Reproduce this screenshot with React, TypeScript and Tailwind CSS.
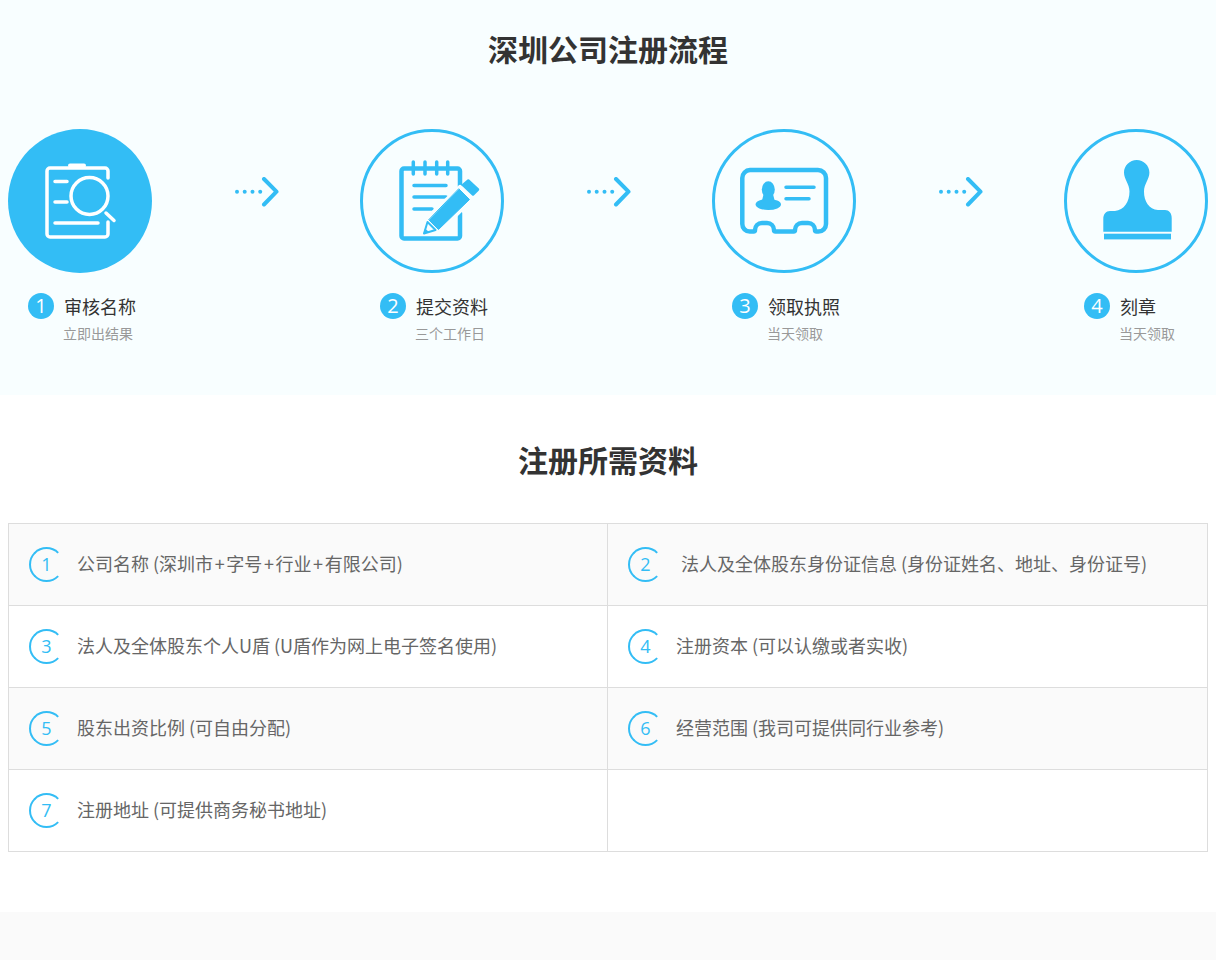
import React from "react";

const steps = [
  { title: "审核名称", sub: "立即出结果", icon: <ReviewIcon />, active: true },
  { title: "提交资料", sub: "三个工作日", icon: <NoteIcon /> },
  { title: "领取执照", sub: "当天领取", icon: <CardIcon /> },
  { title: "刻章", sub: "当天领取", icon: <StampIcon /> },
];

const Plus = () => <span className="mx-[1.6px]">+</span>;

const materials = [
  { id: 1, text: <>公司名称 (深圳市<Plus />字号<Plus />行业<Plus />有限公司)</> },
  { id: 2, text: "法人及全体股东身份证信息 (身份证姓名、地址、身份证号)", shift: true },
  { id: 3, text: "法人及全体股东个人U盾 (U盾作为网上电子签名使用)" },
  { id: 4, text: "注册资本 (可以认缴或者实收)" },
  { id: 5, text: "股东出资比例 (可自由分配)" },
  { id: 6, text: "经营范围 (我司可提供同行业参考)" },
  { id: 7, text: "注册地址 (可提供商务秘书地址)" },
];

function ReviewIcon() {
  return (
    <svg viewBox="0 0 144 144" className="w-full h-full" fill="none" stroke="#fff" strokeWidth="3.500" strokeLinecap="round">
      <path d="M100 49V42a3 3 0 0 0-3-3H42a3 3 0 0 0-3 3v63a3 3 0 0 0 3 3h55a3 3 0 0 0 3-3V93" />
      <path d="M62 36.500h14" strokeWidth="4" />
      <path d="M47 52.500h12M47 73h12M47 94h43" />
      <circle cx="81.500" cy="67" r="18.500" />
      <path d="M98 84l8 7.500" />
    </svg>
  );
}

function NoteIcon() {
  return (
    <svg viewBox="0 0 144 144" className="w-full h-full" fill="none" stroke="#33bdf5" strokeLinecap="round" strokeLinejoin="round">
      <path d="M100 60V42a2.500 2.500 0 0 0-2.500-2.500H44a2.500 2.500 0 0 0-2.500 2.500v65a2.500 2.500 0 0 0 2.500 2.500h53.500a2.500 2.500 0 0 0 2.500-2.500V84" strokeWidth="4.500" />
      <path d="M53.300 33v12M65 33v12M76.700 33v12M87.700 33v12" strokeWidth="3.500" />
      <path d="M54 56.500h32M54 68h32M54 80h18" strokeWidth="3.500" />
      {/* gap between the pencil and the pad */}
      <path d="M100 58.500L111.700 70L78 103L63.300 104.500L67 90Z" fill="#f8feff" stroke="#f8feff" strokeWidth="5" />
      <path d="M99 60L109.500 70.500L78.500 100.500L69 91Z" fill="#33bdf5" stroke="#33bdf5" strokeWidth="1" />
      <path d="M108.300 51.500L118 60.500L113 65.500L103 56Z" fill="#33bdf5" stroke="#33bdf5" strokeWidth="2.500" />
      <path d="M67.500 93L75.500 101L64 104.500Z" fill="#f8feff" stroke="#33bdf5" strokeWidth="2" />
      <path d="M63.500 104.500L65 99.500L69 103Z" fill="#33bdf5" stroke="none" />
    </svg>
  );
}

function CardIcon() {
  return (
    <svg viewBox="0 0 144 144" className="w-full h-full" fill="none" stroke="#33bdf5" strokeLinecap="round" strokeLinejoin="round">
      <path
        d="M38 41h68a8 8 0 0 1 8 8v46a7.500 7.500 0 0 1-7.500 7.500h-2a1.500 1.500 0 0 1-1.500-1.500c0-4-3-7-7-7H90c-4 0-7 3-7 7a1.500 1.500 0 0 1-1.500 1.500h-18a1.500 1.500 0 0 1-1.500-1.500c0-4-3-7-7-7H50c-4 0-7 3-7 7a1.500 1.500 0 0 1-1.500 1.500h-3.700A7.500 7.500 0 0 1 30.300 95V49a8 8 0 0 1 7.700-8Z"
        strokeWidth="4.500"
      />
      <ellipse cx="56.300" cy="60.500" rx="6.500" ry="8.300" fill="#33bdf5" stroke="none" />
      <ellipse cx="56.300" cy="75.500" rx="12.700" ry="5.500" fill="#33bdf5" stroke="none" />
      <path d="M61 65h-9.400l-2 8h13.400Z" fill="#33bdf5" stroke="none" />
      <path d="M74 58.300h28M74 69.700h23" strokeWidth="3.500" />
    </svg>
  );
}

function StampIcon() {
  return (
    <svg viewBox="0 0 144 144" className="w-full h-full" fill="#33bdf5">
      <path d="M72.700 31c7 0 12.700 5.600 12.700 12.600c0 7-5.400 11.500-5.400 19c0 10 5 18 14 18.400h7c4 0 6.700 3 6.700 8V102.700H39.300V90c0-5 2.700-8 6.700-8h5c9-.4 14.500-9.400 14.500-19.400c0-7.500-5.500-12-5.500-19C60 36.600 65.700 31 72.700 31Z" />
      <rect x="40" y="104.700" width="67" height="5.700" />
    </svg>
  );
}

function Arrow() {
  return (
    <svg viewBox="0 0 44 30" className="w-[44px] h-[30px] self-start mt-[48px] translate-x-px" fill="#33bdf5" stroke="none">
      <circle cx="2" cy="14.700" r="2" />
      <circle cx="9.700" cy="14.700" r="2" />
      <circle cx="17.500" cy="14.700" r="2" />
      <circle cx="25.200" cy="14.700" r="2" />
      <path d="M29 2L41.500 14.700L29 27.500" fill="none" stroke="#33bdf5" strokeWidth="4" strokeLinecap="round" strokeLinejoin="round" />
    </svg>
  );
}

function Step({ step, num }: { step: (typeof steps)[number]; num: number }) {
  return (
    <div className="w-[144px]">
      <div className={step.active ? "w-[144px] h-[144px] rounded-full bg-[#33bdf5]" : "w-[144px] h-[144px] rounded-full border-[3px] border-[#33bdf5] [&>svg]:-m-[3px] [&>svg]:w-[144px] [&>svg]:h-[144px]"}>
        {step.icon}
      </div>
      <div className="mt-5 ml-5 flex items-center gap-[10px]">
        <span className="w-[26px] h-[26px] rounded-full bg-[#33bdf5] text-white text-[20px] leading-none flex items-center justify-center font-['Open_Sans',sans-serif]">
          {num}
        </span>
        <span className="text-[18px] leading-[26px] text-[#333] whitespace-nowrap">{step.title}</span>
      </div>
      <div className="mt-1 ml-[55px] text-[14px] leading-5 text-[#999] whitespace-nowrap">{step.sub}</div>
    </div>
  );
}

function Ring({ num }: { num: number }) {
  return (
    <span className="w-[35px] h-[35px] shrink-0 rounded-full border-2 border-[#33bdf5] border-r-transparent flex items-center justify-center text-[18px] text-[#33bdf5] font-['Open_Sans',sans-serif]">
      {num}
    </span>
  );
}

export default function App() {
  return (
    <div className="min-h-[960px] bg-white font-['Noto_Sans_CJK_SC','Noto_Sans',sans-serif]">
      <section className="h-[395px] bg-[#f8feff]">
        <div className="w-[1200px] mx-auto">
          <h2 className="pt-[28px] text-center text-[30px] leading-[40px] font-bold text-[#333]">深圳公司注册流程</h2>
          <div className="mt-[61px] flex justify-between">
            {steps.map((step, i) => (
              <React.Fragment key={step.title}>
                <Step step={step} num={i + 1} />
                {i < 3 && <Arrow />}
              </React.Fragment>
            ))}
          </div>
        </div>
      </section>

      <section className="w-[1200px] mx-auto">
        <h2 className="pt-[44px] text-center text-[30px] leading-[40px] font-bold text-[#333]">注册所需资料</h2>
        <div className="mt-[44px] grid grid-cols-2 border-l border-r border-t border-[#ddd]">
          {materials.map((m, i) => (
            <div
              key={m.id}
              className={`h-[82px] pl-5 flex items-center gap-[13px] border-b border-[#ddd] ${i % 2 === 0 ? "border-r" : ""} ${i % 4 < 2 ? "bg-[#fafafa]" : "bg-white"}`}
            >
              <Ring num={m.id} />
              <span className={`pb-[2px] text-[18px] text-[#666] whitespace-nowrap ${m.shift ? "ml-[5px]" : ""}`}>{m.text}</span>
            </div>
          ))}
          <div className="h-[82px] border-b border-[#ddd]" />
        </div>
      </section>

      <div className="mt-[60px] h-[48px] bg-[#fafafa]" />
    </div>
  );
}
